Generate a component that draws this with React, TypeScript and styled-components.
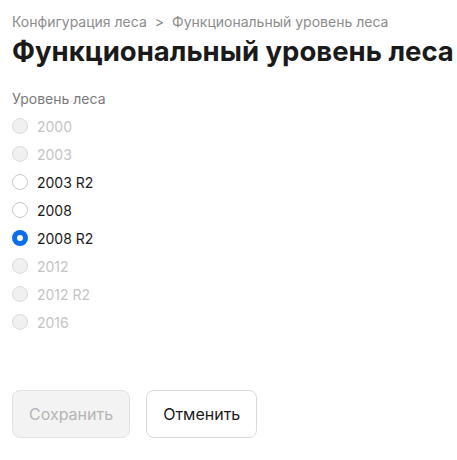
import React, { useState } from "react";
import styled, { createGlobalStyle } from "styled-components";

const Global = createGlobalStyle`
  html, body { margin: 0; padding: 0; background: #fff; }
  body { font-family: Inter, "Noto Sans", sans-serif; color: #1a1a1a; }
  * { box-sizing: border-box; }
`;

const Page = styled.div`
  padding: 13px 2px 12px 12px;
  display: flex;
  flex-direction: column;
`;

const Breadcrumbs = styled.nav`
  display: flex;
  align-items: center;
  gap: 8px;
  font-size: 14px;
  line-height: 18px;
  color: #8c8c8c;
`;

const Title = styled.h1`
  margin: 3px 0 0 0;
  font-size: 27.5px;
  line-height: 34px;
  font-weight: 700;
  color: #1a1a1a;
  white-space: nowrap;
`;

const Field = styled.fieldset`
  border: 0;
  margin: 22px 0 0 0;
  padding: 0;
  display: flex;
  flex-direction: column;
`;

const Legend = styled.legend`
  padding: 0;
  font-size: 14px;
  line-height: 18px;
  color: #7a7a7a;
  margin-bottom: 4px;
`;

const Option = styled.label<{ $disabled?: boolean }>`
  display: flex;
  align-items: center;
  gap: 9px;
  height: 28px;
  font-size: 14px;
  color: ${(p) => (p.$disabled ? "#c4c4c4" : "#1a1a1a")};
  cursor: ${(p) => (p.$disabled ? "default" : "pointer")};
`;

const Circle = styled.span<{ $checked?: boolean; $disabled?: boolean }>`
  width: 16px;
  height: 16px;
  border-radius: 50%;
  flex: none;
  display: flex;
  align-items: center;
  justify-content: center;
  background: ${(p) => (p.$checked ? "#0a6fe8" : p.$disabled ? "#f0f0f0" : "#fff")};
  border: ${(p) => (p.$checked ? "none" : p.$disabled ? "1px solid #dcdcdc" : "1px solid #c8c8c8")};
  &::after {
    content: "";
    display: ${(p) => (p.$checked ? "block" : "none")};
    width: 6px;
    height: 6px;
    border-radius: 50%;
    background: #fff;
  }
`;

const HiddenInput = styled.input`
  position: absolute;
  opacity: 0;
  width: 0;
  height: 0;
`;

const Actions = styled.div`
  display: flex;
  gap: 16px;
  margin-top: 54px;
`;

const Button = styled.button<{ $disabled?: boolean }>`
  height: 48px;
  padding: 0 16px;
  border-radius: 8px;
  font-family: Inter, "Noto Sans", sans-serif;
  font-size: 16px;
  border: 1px solid ${(p) => (p.$disabled ? "#e2e2e2" : "#d9d9d9")};
  background: ${(p) => (p.$disabled ? "#f3f3f3" : "#fff")};
  color: ${(p) => (p.$disabled ? "#b5b5b5" : "#1a1a1a")};
`;

const options = [
  { v: "2000", d: true },
  { v: "2003", d: true },
  { v: "2003 R2", d: false },
  { v: "2008", d: false },
  { v: "2008 R2", d: false },
  { v: "2012", d: true },
  { v: "2012 R2", d: true },
  { v: "2016", d: true },
];

export default function App() {
  const [value, setValue] = useState("2008 R2");
  return (
    <Page>
      <Global />
      <Breadcrumbs>
        <span>Конфигурация леса</span>
        <span>&gt;</span>
        <span>Функциональный уровень леса</span>
      </Breadcrumbs>
      <Title>Функциональный уровень леса</Title>
      <Field>
        <Legend>Уровень леса</Legend>
        {options.map((o) => (
          <Option key={o.v} $disabled={o.d}>
            <HiddenInput
              type="radio"
              name="level"
              disabled={o.d}
              checked={value === o.v}
              onChange={() => setValue(o.v)}
            />
            <Circle $checked={value === o.v} $disabled={o.d} />
            {o.v}
          </Option>
        ))}
      </Field>
      <Actions>
        <Button $disabled disabled>Сохранить</Button>
        <Button>Отменить</Button>
      </Actions>
    </Page>
  );
}
